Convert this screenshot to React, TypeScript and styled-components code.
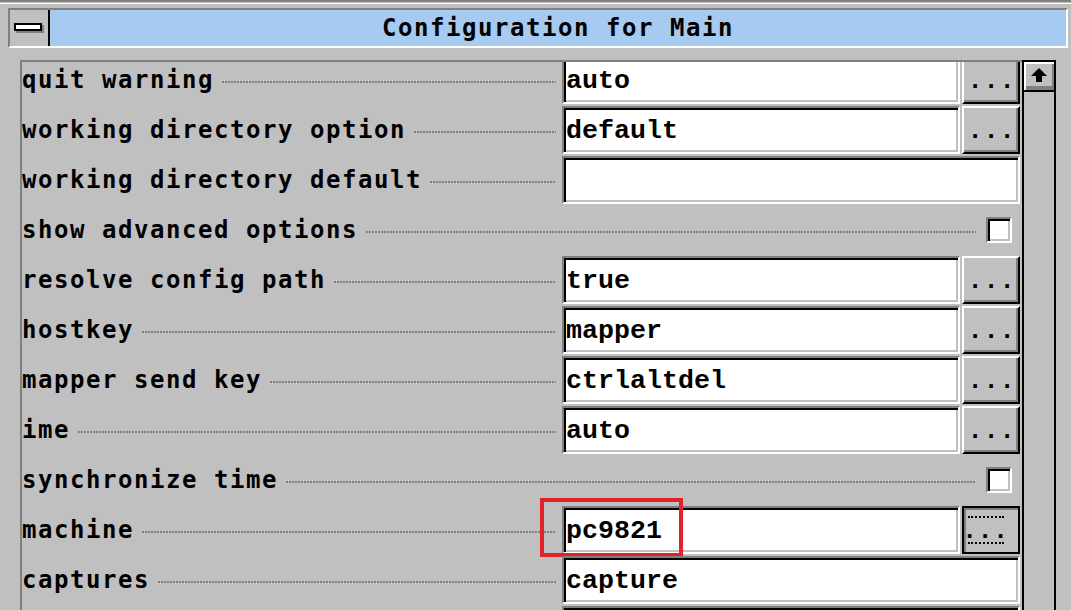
import React from 'react';
import styled, { createGlobalStyle } from 'styled-components';

const Global = createGlobalStyle`
  html, body { margin: 0; padding: 0; background: #c0c0c0; }
  body { overflow: hidden; }
`;

const labelFont = `"DejaVu Sans Mono", "Liberation Mono", monospace`;
const valueFont = `"Liberation Mono", "DejaVu Sans Mono", monospace`;

const Screen = styled.div`
  width: 1071px;
  height: 610px;
  overflow: hidden;
  background: #c0c0c0;
  display: flex;
  flex-direction: column;
  box-sizing: border-box;
  border-top: 2px solid #808080;
`;

const TopEdge = styled.div`
  flex: none;
  height: 1px;
  border-bottom: 1px solid #ffffff;
`;

const TitleBar = styled.div`
  flex: none;
  margin: 4px 3px 0 8px;
  height: 40px;
  box-sizing: border-box;
  display: flex;
  border: 2px solid;
  border-color: #808080 #ffffff #ffffff #808080;
`;

const CloseBox = styled.div`
  width: 38px;
  flex: none;
  border-right: 2px solid #000;
  background: #c0c0c0;
  display: flex;
  align-items: center;
  justify-content: center;
`;

const CloseGlyph = styled.div`
  width: 28px;
  height: 8px;
  box-sizing: border-box;
  border: 2px solid #000;
  background: #fff;
  box-shadow: 2px 2px 0 #808080;
  margin: 0 2px 2px 0;
`;

const TitleText = styled.div`
  flex: 1;
  background: #a6caf0;
  display: flex;
  align-items: center;
  justify-content: center;
  font-family: ${labelFont};
  font-weight: bold;
  font-size: 24px;
  letter-spacing: 1.55px;
  color: #000;
  white-space: pre;
`;

const Body = styled.div`
  flex: 1;
  min-height: 0;
  margin: 12px 0 0 20px;
  display: flex;
`;

const List = styled.div`
  width: 1002px;
  flex: none;
  box-sizing: border-box;
  border-left: 2px solid #808080;
  border-top: 2px solid #808080;
  overflow: hidden;
`;

const Rows = styled.div`
  margin-top: -6px;
  padding-right: 2px;
  display: flex;
  flex-direction: column;
  gap: 2px;
`;

const Row = styled.div`
  flex: none;
  height: 48px;
  display: flex;
  align-items: center;
`;

const LabelArea = styled.div<{ $fill?: boolean }>`
  display: flex;
  align-items: center;
  min-width: 0;
  ${(p) => (p.$fill ? 'flex: 1;' : 'width: 540px; flex: none;')}
`;

const Label = styled.span`
  font-family: ${labelFont};
  font-weight: bold;
  font-size: 24px;
  letter-spacing: 1.55px;
  color: #000;
  white-space: pre;
`;

const Leader = styled.div`
  flex: 1;
  height: 2px;
  margin: 3px 6px 0 8px;
  background: repeating-linear-gradient(90deg, #808080 0 2px, transparent 2px 3px);
`;

const Field = styled.div<{ $full?: boolean }>`
  position: relative;
  flex: none;
  width: ${(p) => (p.$full ? '458px' : '398px')};
  height: 48px;
  box-sizing: border-box;
  border: 2px solid;
  border-color: #808080 #ffffff #ffffff #808080;
  box-shadow: inset 2px 2px 0 #000, inset -2px -2px 0 #c0c0c0;
  background: #fff;
  padding: 2px 0 0 2px;
  display: flex;
  align-items: center;
  font-family: ${valueFont};
  font-weight: bold;
  font-size: 26.67px;
  color: #000;
  white-space: pre;
`;

const DotsButton = styled.div`
  flex: none;
  width: 58px;
  height: 48px;
  margin-left: 2px;
  box-sizing: border-box;
  border: 2px solid;
  border-color: #ffffff #000 #000 #ffffff;
  box-shadow: inset -2px -2px 0 #808080;
  background: #c0c0c0;
  display: flex;
  align-items: center;
  justify-content: center;
  padding-left: 3px;
  font-family: ${labelFont};
  font-weight: bold;
  font-size: 22px;
  letter-spacing: 2.76px;
  color: #000;
`;

const PressedButton = styled.div`
  flex: none;
  width: 58px;
  height: 48px;
  margin-left: 2px;
  box-sizing: border-box;
  border: 2px solid #000;
  box-shadow: inset 2px 2px 0 #808080;
  background: #c0c0c0;
  display: flex;
  align-items: center;
  padding-left: 4px;
`;

const FocusRect = styled.div`
  width: 36px;
  height: 28px;
  box-sizing: border-box;
  border-top: 2px dotted #000;
  border-bottom: 2px dotted #000;
  display: flex;
  align-items: center;
  overflow: visible;
`;

const FocusDots = styled.span`
  margin-left: -5px;
  font-family: ${labelFont};
  font-weight: bold;
  font-size: 22px;
  letter-spacing: 2.3px;
  color: #000;
  white-space: pre;
`;

const CheckBox = styled.div`
  flex: none;
  width: 26px;
  height: 26px;
  box-sizing: border-box;
  border: 2px solid;
  border-color: #808080 #ffffff #ffffff #808080;
  box-shadow: inset 2px 2px 0 #000, inset -2px -2px 0 #c0c0c0;
  background: #fff;
  margin: 0 8px 0 4px;
`;

const Highlight = styled.div`
  position: absolute;
  left: -24px;
  top: -10px;
  width: 143px;
  height: 59px;
  box-sizing: border-box;
  border: 4px solid #e0232b;
  pointer-events: none;
`;

const ScrollBar = styled.div`
  width: 34px;
  flex: none;
  box-sizing: border-box;
  border: 2px solid #000;
  border-bottom: none;
  background: #c0c0c0;
  display: flex;
  flex-direction: column;
`;

const UpButton = styled.div`
  flex: none;
  height: 30px;
  box-sizing: border-box;
  border-bottom: 2px solid #000;
  background: #c0c0c0;
  box-shadow: inset 2px 2px 0 #fff, inset -2px -4px 0 #808080;
  display: flex;
  align-items: center;
  justify-content: center;
`;

type Item =
  | { label: string; kind: 'select'; value: string; pressed?: boolean; marked?: boolean }
  | { label: string; kind: 'text'; value: string }
  | { label: string; kind: 'check' };

const items: Item[] = [
  { label: 'quit warning', kind: 'select', value: 'auto' },
  { label: 'working directory option', kind: 'select', value: 'default' },
  { label: 'working directory default', kind: 'text', value: '' },
  { label: 'show advanced options', kind: 'check' },
  { label: 'resolve config path', kind: 'select', value: 'true' },
  { label: 'hostkey', kind: 'select', value: 'mapper' },
  { label: 'mapper send key', kind: 'select', value: 'ctrlaltdel' },
  { label: 'ime', kind: 'select', value: 'auto' },
  { label: 'synchronize time', kind: 'check' },
  { label: 'machine', kind: 'select', value: 'pc9821', pressed: true, marked: true },
  { label: 'captures', kind: 'text', value: 'capture' },
  { label: '', kind: 'text', value: '' },
];

function UpArrow() {
  return (
    <svg width="30" height="28" viewBox="0 0 30 28">
      <polygon points="15,6 23,14 18,14 18,20 12,20 12,14 7,14" fill="#000" />
    </svg>
  );
}

function ConfigRow({ item }: { item: Item }) {
  if (item.kind === 'check') {
    return (
      <Row>
        <LabelArea $fill>
          <Label>{item.label}</Label>
          <Leader />
        </LabelArea>
        <CheckBox />
      </Row>
    );
  }
  return (
    <Row>
      <LabelArea>
        {item.label && <Label>{item.label}</Label>}
        <Leader />
      </LabelArea>
      {item.kind === 'text' ? (
        <Field $full>{item.value}</Field>
      ) : (
        <>
          <Field>
            {item.value}
            {item.marked && <Highlight />}
          </Field>
          {item.pressed ? (
            <PressedButton>
              <FocusRect>
                <FocusDots>...</FocusDots>
              </FocusRect>
            </PressedButton>
          ) : (
            <DotsButton>...</DotsButton>
          )}
        </>
      )}
    </Row>
  );
}

export default function App() {
  return (
    <>
      <Global />
      <Screen>
        <TopEdge />
        <TitleBar>
          <CloseBox>
            <CloseGlyph />
          </CloseBox>
          <TitleText>Configuration for Main</TitleText>
        </TitleBar>
        <Body>
          <List>
            <Rows>
              {items.map((it, i) => (
                <ConfigRow key={i} item={it} />
              ))}
            </Rows>
          </List>
          <ScrollBar>
            <UpButton>
              <UpArrow />
            </UpButton>
          </ScrollBar>
        </Body>
      </Screen>
    </>
  );
}
